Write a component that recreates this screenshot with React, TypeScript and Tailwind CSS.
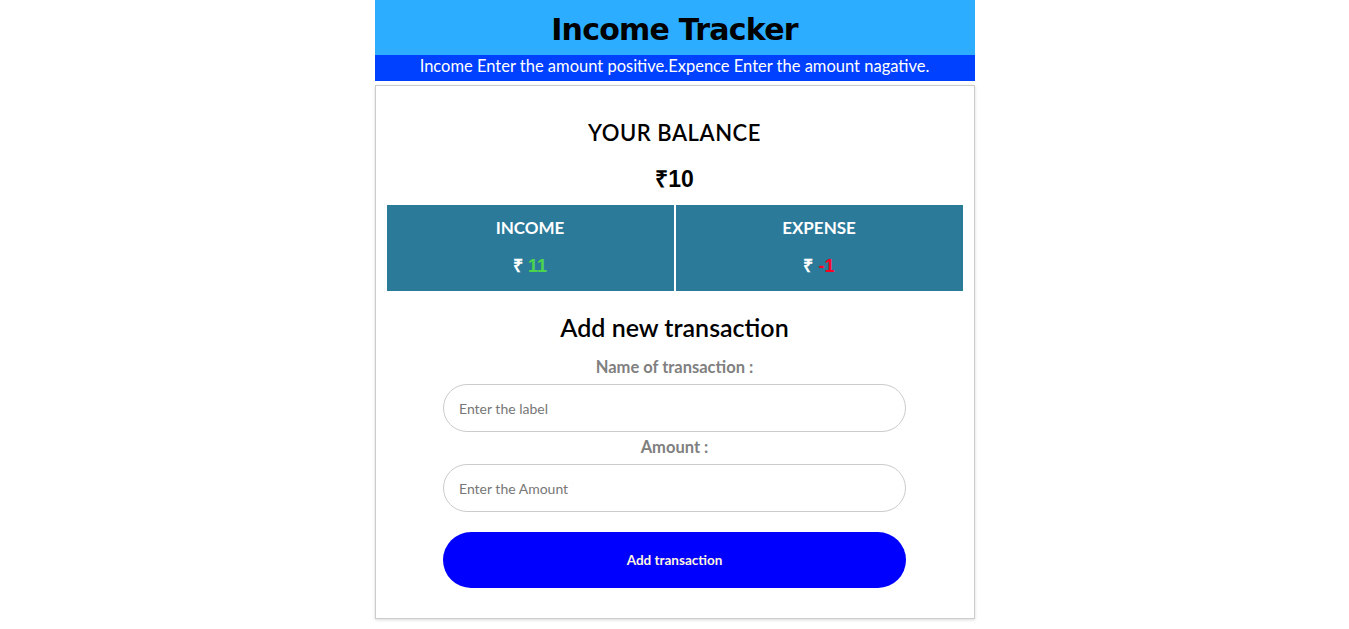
import React from 'react';

const sans = 'font-["Lato","Noto_Sans",sans-serif]';

export default function App() {
  return (
    <div className={`min-h-screen bg-white ${sans}`}>
      <div className="mx-auto w-[600px]">
        <header className="bg-[#2cadff] h-[55px] flex items-center justify-center">
          <h1 className='text-[30px] leading-none font-bold text-black font-["DejaVu_Sans",sans-serif] tracking-tight pt-[4px]'>
            Income Tracker
          </h1>
        </header>
        <p className="bg-[#0040ff] h-[26px] text-center text-white text-[16.5px] leading-[22px]">
          Income Enter the amount positive.Expence Enter the amount nagative.
        </p>

        <main className="mt-[4px] border border-[#cccccc] shadow-[0_1px_3px_rgba(0,0,0,0.15)] px-[11px] pt-[33px] pb-[30px]">
          <h2 className="text-center text-[22px] leading-[28px] font-semibold text-black tracking-wide">YOUR BALANCE</h2>
          <h2 className='mt-[18px] text-center text-[23px] leading-[28px] font-bold text-black font-["Liberation_Sans",sans-serif]'>₹10</h2>

          <div className="mt-[12px] grid grid-cols-2 gap-[2px] h-[86px]">
            <div className="bg-[#2c7a9a] flex flex-col items-center pt-[12px]">
              <h3 className="text-white text-[17px] leading-[22px] font-bold">INCOME</h3>
              <p className='mt-[16px] text-[18px] leading-[22px] font-bold font-["Liberation_Sans",sans-serif] text-white'>
                ₹ <span className="text-[#4cd44c]">11</span>
              </p>
            </div>
            <div className="bg-[#2c7a9a] flex flex-col items-center pt-[12px]">
              <h3 className="text-white text-[17px] leading-[22px] font-bold">EXPENSE</h3>
              <p className='mt-[16px] text-[18px] leading-[22px] font-bold font-["Liberation_Sans",sans-serif] text-white'>
                ₹ <span className="text-[#ff0022]">-1</span>
              </p>
            </div>
          </div>

          <h2 className="mt-[21px] text-center text-[25px] leading-[30px] font-semibold text-black">Add new transaction</h2>

          <form className="mt-[15px] mx-auto w-[463px] flex flex-col items-center">
            <label className="text-[16.5px] leading-[20px] font-bold text-[#808080]">Name of transaction :</label>
            <input
              type="text"
              placeholder="Enter the label"
              className="mt-[7px] w-full h-[48px] rounded-full border border-[#cccccc] px-[15px] text-[14px] placeholder:text-[#777777] outline-none"
            />
            <label className="mt-[5px] text-[16.5px] leading-[20px] font-bold text-[#808080]">Amount :</label>
            <input
              type="text"
              placeholder="Enter the Amount"
              className="mt-[7px] w-full h-[48px] rounded-full border border-[#cccccc] px-[15px] text-[14px] placeholder:text-[#777777] outline-none"
            />
            <button
              type="button"
              className="mt-[20px] w-full h-[56px] rounded-[28px] bg-[#0000ff] text-[#fff5dc] text-[13.5px] font-bold"
            >
              Add transaction
            </button>
          </form>
        </main>
      </div>
    </div>
  );
}
